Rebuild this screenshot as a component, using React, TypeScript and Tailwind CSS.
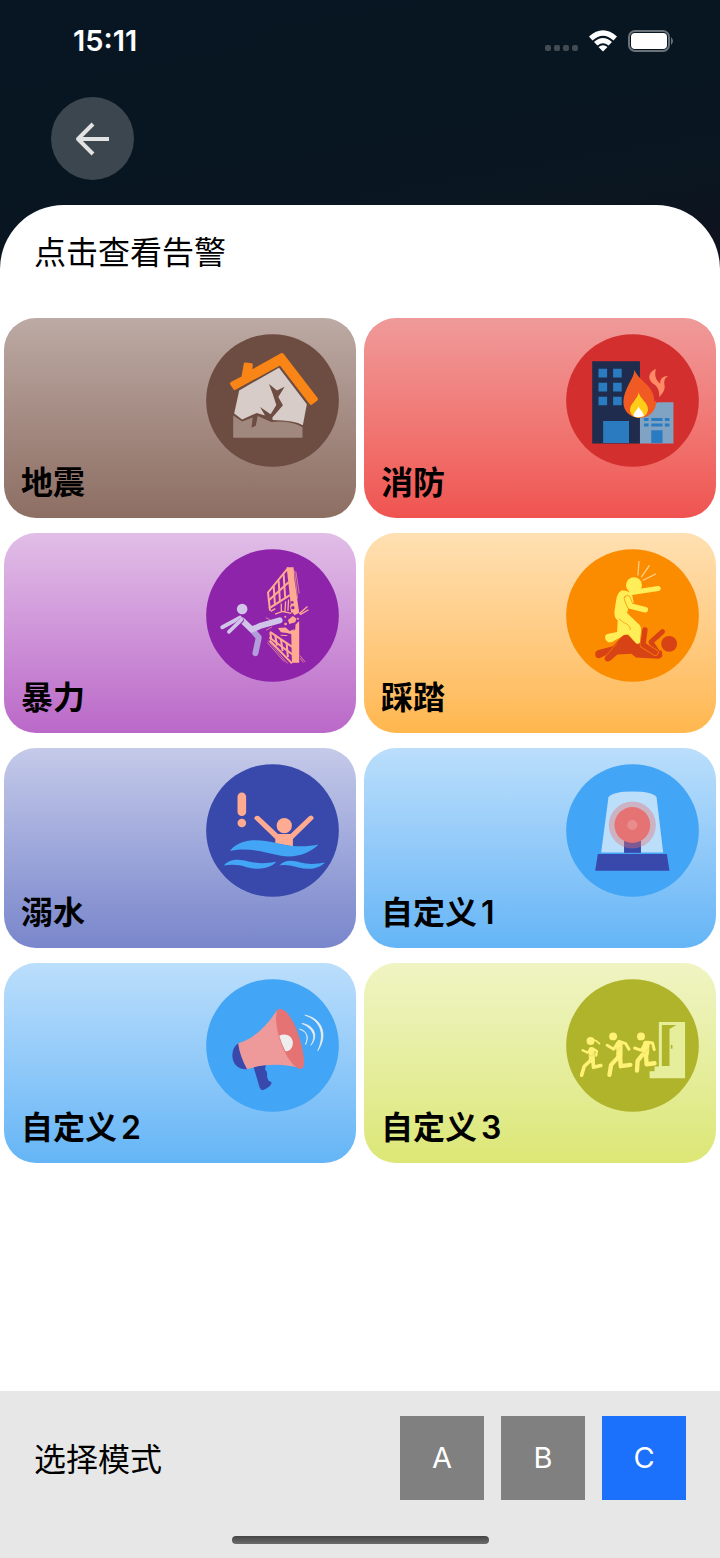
import { useState } from "react";
import type { ReactNode } from "react";
import clsx from "clsx";

const EarthquakeIcon = () => (
	<>
		<path d="M117 196L237 128L321 238L309 301Q285 286 218 285L217 278L249 241L235 216L254 185L231 196L207 177L218 206L229 240L212 268L180 246L195 272L170 264L126 284L102 266Z" fill="#d7ccc8" />
		<path d="M99 272L126 290L158 278L154 309L167 303L173 273L214 291Q275 286 308 307V339H99Z" fill="#a1887f" />
		<path d="M92 171L124 154L131 115Q132 111 137 112L155 114Q159 115 158 120L157 132L243 84Q248 82 252 87L353 218Q357 223 352 227L338 238Q334 242 329 237L240 121L106 194Q102 196 99 192L90 178Q88 174 92 171Z" fill="#f98517" />
	</>
);

const FireIcon = () => (
	<>
		<path d="M96 108H240V356H96Z" fill="#1f2c4d" />
		<path d="M240 232H341V356H240Z" fill="#80a3c3" />
		<path d="M115 131h26v26h-26zM159 131h26v26h-26zM115 173h26v26h-26zM159 173h26v26h-26zM115 215h26v26h-26zM159 215h26v26h-26zM129 288h78v67h-78zM274 316h34v39h-34zM252 279h14v9h-14zM274 279h34v9h-34zM315 279h14v9h-14zM252 296h14v9h-14zM274 296h34v9h-34zM315 296h14v9h-14z" fill="#2a7bc0" />
		<path d="M276 192C294 206 292 220 291 234L280 232Z" fill="#d32f2f" />
		<path d="M223 134C225 158 190 190 190 232C190 260 211 279 239 279C270 279 291 255 289 226L283 231C285 181 239 172 223 134Z" fill="#f15a22" />
		<path d="M288 131C262 143 264 165 280 176C292 183 300 196 298 216C308 206 317 194 314 180C312 168 314 160 325 153C308 153 300 162 301 176C285 162 284 149 288 131Z" fill="#ff8a65" />
		<path d="M236 202C234 223 210 235 210 255C210 267 221 278 236 278C253 278 264 267 264 253C264 232 242 225 236 202Z" fill="#ffcd17" />
		<path d="M236 244C232 257 220 261 221 274Q236 281 251 273C252 260 239 257 236 244Z" fill="#fff" />
	</>
);

const ViolenceIcon = () => (
	<>
		<path d="M260 81H281L284 120L298 218L284 226L275 214L270 170Z" fill="#ffab91" />
		<path d="M298 243V369H276L274 279L286 268L287 254Z" fill="#ffab91" />
		<g fill="none" stroke="#ffab91" strokeWidth="6">
			<path d="M265 83L204 157L210 212" />
			<path d="M205 182L266 126M207 205L270 165" />
			<path d="M221 138L225 196M236 121L240 187M251 103L256 176" />
			<path d="M210 276L277 321M208 293L278 344M209 302L276 371" />
			<path d="M211 278L214 300M226 288L231 317M243 298L248 334M260 309L264 352" />
		</g>
		<g fill="none" stroke="#ffab91" strokeWidth="2">
			<path d="M204 302L263 371M202 308L253 366M284 91L293 175M288 94L298 160" />
			<path d="M300 347L316 367M301 355L310 368M197 233L210 239M198 271L216 261" />
		</g>
		<path d="M244 190V214M257 184L255 218M266 178L264 212M272 196L276 218M212 214L226 206M225 222L248 214L274 220" fill="none" stroke="#ffab91" strokeWidth="4" />
		<circle cx="277" cy="187" r="4" fill="#8e24aa" />
		<circle cx="279" cy="203" r="5" fill="#8e24aa" />
		<path d="M298 221L323 199M301 224L326 209" stroke="#ffab91" strokeWidth="4" />
		<path d="M264 240L279 228L290 236L286 247L268 252Z" fill="#ffab91" />
		<path d="M234 264L257 263L269 273L283 268L278 284L261 279L243 277Z" fill="#ffab91" />
		<path d="M246 270L262 272M242 286L262 287" stroke="#ffab91" strokeWidth="3" />
		<circle cx="257" cy="252" r="4" fill="#ffab91" />
		<circle cx="256" cy="230" r="3" fill="#ffab91" />
		<circle cx="294" cy="236" r="3" fill="#ffab91" />
		<path d="M153 266L176 293L166 340" fill="none" stroke="#b39ddb" strokeWidth="18" strokeLinecap="round" strokeLinejoin="round" />
		<g fill="none" stroke="#d1c4e9" strokeLinecap="round" strokeLinejoin="round">
			<path d="M119 233L66 262" strokeWidth="12" />
			<path d="M126 241L155 269L183 257L239 241" strokeWidth="18" />
			<path d="M124 241L87 277" stroke="#8e24aa" strokeWidth="15" />
			<path d="M124 239L86 276" strokeWidth="11" />
		</g>
		<circle cx="126" cy="207" r="16" fill="#d1c4e9" />
	</>
);

const StampedeIcon = () => (
	<>
		<path d="M237 62L234 106M269 75L244 111M288 101L248 121" fill="none" stroke="#ffcc80" strokeWidth="4" />
		<circle cx="222" cy="135" r="24" fill="#ffee58" />
		<path d="M215 157L295 145" stroke="#ffee58" strokeWidth="15" strokeLinecap="round" />
		<path d="M184 151Q204 149 216 163L221 187L204 208L201 219L239 255Q245 263 243 274L240 308Q232 317 224 307L205 283L190 287L155 307Q139 310 135 295Q133 282 149 281L171 276L173 241Q162 234 163 215L168 181Q171 158 184 151Z" fill="#ffee58" />
		<path d="M176 236Q186 246 203 254Q211 259 211 270" fill="none" stroke="#fb8c00" strokeWidth="2" />
		<path d="M202 176L211 198L256 209" fill="none" stroke="#fb8c00" strokeWidth="21" strokeLinecap="round" strokeLinejoin="round" />
		<path d="M202 176L211 198L256 209" fill="none" stroke="#ffee58" strokeWidth="17" strokeLinecap="round" strokeLinejoin="round" />
		<path d="M187 289Q198 280 208 290L231 313L244 309L253 326L283 339L304 331Q314 350 297 357L228 353L214 342L172 344L151 362Q142 368 136 363Q129 352 139 345L120 355Q105 356 105 344Q105 332 118 330L158 319Z" fill="#d84315" />
		<path d="M171 310L142 343L130 356" fill="none" stroke="#fb8c00" strokeWidth="2" />
		<g fill="none" strokeLinecap="round" strokeLinejoin="round">
			<path d="M308 275L273 307L299 345" stroke="#d84315" strokeWidth="15" />
			<path d="M255 270L249 315L286 338" stroke="#fb8c00" strokeWidth="20" />
			<path d="M255 270L249 315L286 338" stroke="#d84315" strokeWidth="16" />
		</g>
		<circle cx="328" cy="312" r="24" fill="#d84315" />
	</>
);

const DrowningIcon = () => (
	<>
		<rect x="112" y="112" width="26" height="71" rx="13" fill="#ffab91" />
		<circle cx="125" cy="204" r="13" fill="#ffab91" />
		<circle cx="253" cy="212" r="23" fill="#ffab91" />
		<path d="M162 190Q165 179 176 183L234 237H272L327 184Q339 177 342 190L279 252V275L226 265V252Z" fill="#ffab91" />
		<path d="M89 288C125 243 190 256 233 265C274 276 319 277 356 269C329 297 287 310 243 303C189 291 151 277 89 288Z" fill="#42a5f5" />
		<path d="M71 332C89 309 121 313 145 320C177 327 200 326 229 321C209 344 170 346 140 337C115 329 94 328 71 332ZM238 332C257 312 280 317 302 323C325 329 350 328 376 323C354 345 325 344 295 338C275 332 259 329 238 332Z" fill="#42a5f5" />
	</>
);

const SirenIcon = () => (
	<>
		<path d="M145 126Q158 109 217 109Q279 109 290 126L310 293H123Z" fill="#bbdefb" />
		<path d="M192 250H243V294H192Z" fill="#3949ab" />
		<circle cx="217" cy="210" r="71" fill="#e57373" fillOpacity="0.4" />
		<circle cx="217" cy="210" r="54" fill="#e57373" />
		<circle cx="217" cy="210" r="15" fill="#eb8c8c" />
		<path d="M113 297H321L329 348H105Z" fill="#3949ab" />
	</>
);

const MegaphoneIcon = () => (
	<>
		<path d="M160 290L197 285L195 300Q203 303 201 321L205 332L215 338Q213 351 189 361Q183 362 179 354Z" fill="#3949ab" />
		<path d="M118 219C87 228 85 303 142 298Z" fill="#3949ab" />
		<path d="M114 220C167 206 207 157 232 119L305 295C253 281 191 280 141 298Q119 260 114 220Z" fill="#ef9a9a" />
		<path d="M232 119C257 104 285 159 299 204C311 246 321 296 302 297C259 290 215 166 232 119Z" fill="#e57373" />
		<path d="M238 197C263 186 279 203 279 219C278 237 266 246 256 243Q244 220 238 197Z" fill="#eee" />
		<path d="M299 177C321 181 327 201 317 224Q334 189 299 177ZM306 160C343 176 349 201 333 226C358 197 342 164 306 160ZM315 135C361 150 378 190 354 242C386 196 368 144 315 135Z" fill="#eee" stroke="#eee" strokeWidth="2" />
	</>
);

const EvacuateIcon = () => (
	<>
		<path d="M297 156H376V325H269V304H284V290H297Z" fill="#e6ee9c" />
		<path d="M306 165H350L329 177V288H306Z" fill="#afb42b" />
		<path d="M333 225h5v11h-5z" fill="#afb42b" />
		<g fill="none" stroke="#fff176" strokeLinecap="round" strokeLinejoin="round">
			<path d="M92 238L82 248L67 241M100 237L110 243L108 257" strokeWidth="7" />
			<path d="M94 240L95 270" strokeWidth="18" />
			<path d="M93 270L72 289L64 316M98 270L100 292L122 287" strokeWidth="11" />
			<path d="M100 209L109 213L118 221" strokeWidth="5" />
			<path d="M172 220L161 238L141 226M177 214L197 221L207 238" strokeWidth="9" />
			<path d="M178 221L178 257" strokeWidth="19" />
			<path d="M176 260L153 285L148 315M180 260L182 289L211 285" strokeWidth="13" />
			<path d="M255 222L244 241L224 234M264 217L278 219L283 239" strokeWidth="9" />
			<path d="M259 222L257 250" strokeWidth="20" />
			<path d="M251 250L233 273L231 302M258 252L260 283L284 280" strokeWidth="13" />
		</g>
		<circle cx="91" cy="213" r="12" fill="#fff176" />
		<circle cx="159" cy="199" r="12" fill="#fff176" />
		<circle cx="243" cy="199" r="12" fill="#fff176" />
		<path d="M103 246L96 259L87 256M181 232L170 244L160 241M266 235L254 250L243 247" fill="none" stroke="#afb42b" strokeOpacity="0.4" strokeWidth="2" />
	</>
);

type Alarm = {
	name: string;
	index?: number;
	bg: string;
	circle: string;
	icon: ReactNode;
};

const alarms: Alarm[] = [
	{ name: "地震", bg: "from-[#bcaaa4] to-[#8d6e63]", circle: "#6d4c41", icon: <EarthquakeIcon /> },
	{ name: "消防", bg: "from-[#ef9a9a] to-[#ef5350]", circle: "#d32f2f", icon: <FireIcon /> },
	{ name: "暴力", bg: "from-[#e1bee7] to-[#ba68c8]", circle: "#8e24aa", icon: <ViolenceIcon /> },
	{ name: "踩踏", bg: "from-[#ffe0b2] to-[#ffb74d]", circle: "#fb8c00", icon: <StampedeIcon /> },
	{ name: "溺水", bg: "from-[#c5cae9] to-[#7986cb]", circle: "#3949ab", icon: <DrowningIcon /> },
	{ name: "自定义", index: 1, bg: "from-[#bbdefb] to-[#64b5f6]", circle: "#42a5f5", icon: <SirenIcon /> },
	{ name: "自定义", index: 2, bg: "from-[#bbdefb] to-[#64b5f6]", circle: "#42a5f5", icon: <MegaphoneIcon /> },
	{ name: "自定义", index: 3, bg: "from-[#f0f4c3] to-[#dce775]", circle: "#afb42b", icon: <EvacuateIcon /> },
];

const modes = ["A", "B", "C"];

const StatusBar = () => (
	<div className="flex h-[82px] items-center justify-between pl-[73px] pr-[46px] text-white">
		<span className="text-[29px] font-semibold leading-8">15:11</span>
		<svg width="130" height="26" viewBox="0 0 130 26" fill="none">
			<g fill="#414b54">
				<rect x="1" y="17" width="6" height="6" rx="2" />
				<rect x="10" y="17" width="6" height="6" rx="2" />
				<rect x="19" y="17" width="6" height="6" rx="2" />
				<rect x="28" y="17" width="6" height="6" rx="2" />
			</g>
			<path d="M45 8.500Q59 -4 73 8.500L69.500 12.500Q59 3 48.500 12.500ZM50 14Q59 6 68 14L64.500 17.500Q59 13 53.500 17.500ZM54.500 19Q59 15.500 63.500 19L59 23.500Z" fill="#fff" />
			<rect x="85" y="3" width="40" height="20" rx="6" stroke="#6a737a" strokeWidth="2" />
			<rect x="87" y="5" width="36" height="16" rx="4" fill="#fff" />
			<path d="M127 9Q131 13 127 17Z" fill="#6a737a" />
		</svg>
	</div>
);

const App = () => {
	const [mode, setMode] = useState("C");

	return (
		<div className="flex min-h-screen flex-col bg-[linear-gradient(170deg,#071622_0px,#081622_200px,#0b1620_300px,#10111d_390px)] font-['Inter','Noto_Sans_CJK_SC',sans-serif] text-black">
			<header className="pb-[25px]">
				<StatusBar />
				<button
					type="button"
					aria-label="返回"
					className="ml-[51px] mt-[15px] flex size-[83px] items-center justify-center rounded-full bg-[#3c464f]"
				>
					<svg width="36" height="36" viewBox="0 0 36 36" fill="none" stroke="#e2e2e2" strokeWidth="4">
						<path d="M18 3L3 18L18 33M3 18H34" strokeLinejoin="round" />
					</svg>
				</button>
			</header>

			<main className="flex-1 rounded-t-[64px] bg-white pb-8 pt-8">
				<h1 className="px-[34px] text-[32px] leading-8">点击查看告警</h1>
				<div className="mt-[49px] grid grid-cols-2 gap-x-2 gap-y-[15px] px-1">
					{alarms.map(({ name, index, bg, circle, icon }) => (
						<button
							key={name + (index ?? "")}
							type="button"
							className={clsx("flex h-[200px] flex-col rounded-[32px] bg-linear-to-b px-[17px] pt-4 text-left", bg)}
						>
							<svg className="size-[133px] self-end" viewBox="17 26 401 401">
								<circle cx="217.500" cy="226.500" r="200" fill={circle} />
								{icon}
							</svg>
							<span className="text-[32px] font-semibold leading-8">
								{name}
								{index && <span className="ml-1">{index}</span>}
							</span>
						</button>
					))}
				</div>
			</main>

			<footer className="bg-[#e7e7e7] pb-[14px] pt-[25px]">
				<div className="flex items-center justify-between px-[34px]">
					<h2 className="pt-1 text-[32px] leading-8">选择模式</h2>
					<div className="flex gap-[17px]">
						{modes.map((item) => (
							<button
								key={item}
								type="button"
								aria-pressed={item === mode}
								onClick={() => setMode(item)}
								className={clsx(
									"size-[84px] text-[29px] leading-8 text-white",
									item === mode ? "bg-[#1c71fc]" : "bg-[#808080]",
								)}
							>
								{item}
							</button>
						))}
					</div>
				</div>
				<div className="mx-auto mt-9 h-2 w-[257px] rounded-full bg-linear-to-b from-[#454545] to-[#6c6c6c]" />
			</footer>
		</div>
	);
};

export default App;
